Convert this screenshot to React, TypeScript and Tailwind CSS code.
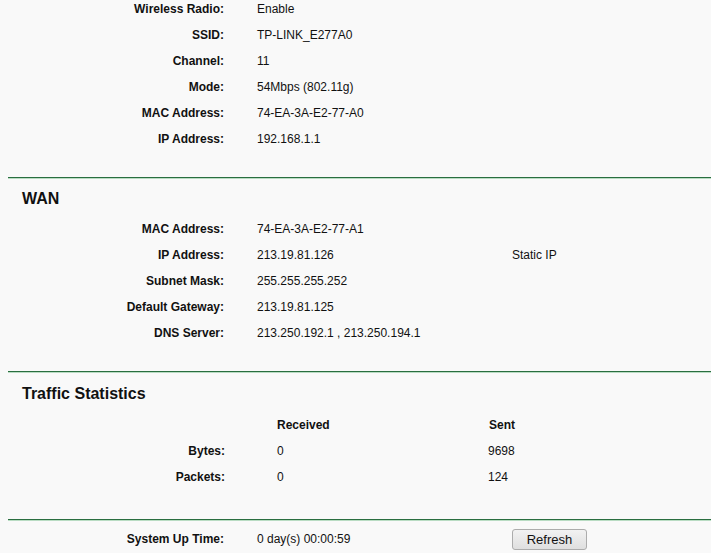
import React from "react";

type Row = { label: string; value: string; extra?: string };

const wireless: Row[] = [
  { label: "Wireless Radio:", value: "Enable" },
  { label: "SSID:", value: "TP-LINK_E277A0" },
  { label: "Channel:", value: "11" },
  { label: "Mode:", value: "54Mbps (802.11g)" },
  { label: "MAC Address:", value: "74-EA-3A-E2-77-A0" },
  { label: "IP Address:", value: "192.168.1.1" },
];

const wan: Row[] = [
  { label: "MAC Address:", value: "74-EA-3A-E2-77-A1" },
  { label: "IP Address:", value: "213.19.81.126", extra: "Static IP" },
  { label: "Subnet Mask:", value: "255.255.255.252" },
  { label: "Default Gateway:", value: "213.19.81.125" },
  { label: "DNS Server:", value: "213.250.192.1 , 213.250.194.1" },
];

const traffic = [
  { label: "Bytes:", received: "0", sent: "9698" },
  { label: "Packets:", received: "0", sent: "124" },
];

const Divider = () => (
  <div className="ml-[8px]">
    <div className="h-px bg-[#2a6e40]" />
    <div className="h-px bg-[#b9dcc3]" />
  </div>
);

const InfoRow = ({ label, value, extra }: Row) => (
  <div className="flex h-[26px] items-center">
    <div className="w-[224px] shrink-0 text-right font-bold">{label}</div>
    <div className="ml-[33px] w-[255px] shrink-0 whitespace-nowrap">{value}</div>
    {extra && <div className="whitespace-nowrap">{extra}</div>}
  </div>
);

const SectionTitle = ({ children }: { children: React.ReactNode }) => (
  <div className="pl-[22px] text-[16px] font-bold leading-[16px]">{children}</div>
);

export default function App() {
  return (
    <div
      className="min-h-[553px] w-[711px] overflow-hidden bg-[#f9f9f9] text-[12px] text-[#111]"
      style={{ fontFamily: '"Liberation Sans", Arial, sans-serif' }}
    >
      <div className="-mt-[4px]">
        {/* Wireless */}
        {wireless.map((r) => (
          <InfoRow key={r.label} {...r} />
        ))}
        <div className="h-[25px]" />
        <Divider />

        {/* WAN */}
        <div className="h-[37px] pt-[12px]">
          <SectionTitle>WAN</SectionTitle>
        </div>
        {wan.map((r) => (
          <InfoRow key={r.label} {...r} />
        ))}
        <div className="h-[25px]" />
        <Divider />

        {/* Traffic */}
        <div className="h-[39px] pt-[13px]">
          <SectionTitle>Traffic Statistics</SectionTitle>
        </div>
        <div className="flex h-[26px] items-center font-bold">
          <div className="w-[277px] shrink-0" />
          <div className="w-[212px] shrink-0">Received</div>
          <div>Sent</div>
        </div>
        {traffic.map((t) => (
          <div key={t.label} className="flex h-[26px] items-center">
            <div className="w-[225px] shrink-0 text-right font-bold">{t.label}</div>
            <div className="ml-[52px] w-[211px] shrink-0">{t.received}</div>
            <div>{t.sent}</div>
          </div>
        ))}
        <div className="h-[29px]" />
        <Divider />

        {/* Uptime */}
        <div className="flex h-[36px] items-center">
          <div className="w-[224px] shrink-0 text-right font-bold">System Up Time:</div>
          <div className="ml-[33px] w-[255px] shrink-0">0 day(s) 00:00:59</div>
          <button className="h-[21px] w-[75px] rounded-[3px] border border-[#acacac] bg-linear-to-b from-[#f2f2f2] to-[#dfdfdf] text-[13px] leading-none text-[#111]">
            Refresh
          </button>
        </div>
      </div>
    </div>
  );
}
